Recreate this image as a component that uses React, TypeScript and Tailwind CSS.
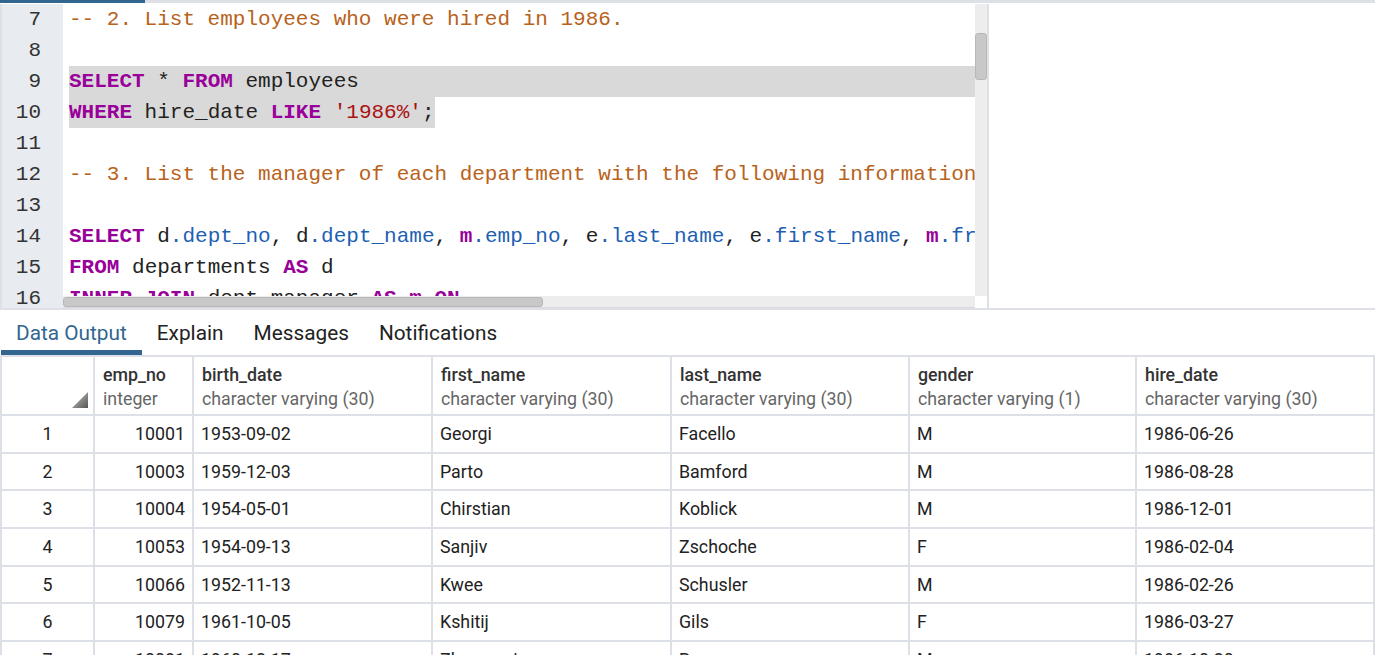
import React from 'react';

type Tok = [string, string?];

const KW = 'text-[#990099] font-bold';
const CM = 'text-[#b8621c]';
const ST = 'text-[#aa1111]';
const PR = 'text-[#1d5fb3]';

const lines: { n: number; toks: Tok[]; sel?: 'full' | 'text' }[] = [
  { n: 7, toks: [['-- 2. List employees who were hired in 1986.', CM]] },
  { n: 8, toks: [] },
  { n: 9, sel: 'full', toks: [['SELECT', KW], [' * '], ['FROM', KW], [' employees']] },
  { n: 10, sel: 'text', toks: [['WHERE', KW], [' hire_date '], ['LIKE', KW], [' '], ["'1986%'", ST], [';']] },
  { n: 11, toks: [] },
  { n: 12, toks: [['-- 3. List the manager of each department with the following information: department number, department name', CM]] },
  { n: 13, toks: [] },
  {
    n: 14,
    toks: [
      ['SELECT', KW], [' d'], ['.dept_no', PR], [', d'], ['.dept_name', PR], [', '], ['m', KW], ['.emp_no', PR],
      [', e'], ['.last_name', PR], [', e'], ['.first_name', PR], [', '], ['m', KW], ['.from_date', PR], [', '], ['m', KW], ['.to_date', PR],
    ],
  },
  { n: 15, toks: [['FROM', KW], [' departments '], ['AS', KW], [' d']] },
  { n: 16, toks: [['INNER JOIN', KW], [' dept_manager '], ['AS', KW], [' '], ['m', KW], [' '], ['ON', KW]] },
];

const cols = [
  { name: 'emp_no', type: 'integer' },
  { name: 'birth_date', type: 'character varying (30)' },
  { name: 'first_name', type: 'character varying (30)' },
  { name: 'last_name', type: 'character varying (30)' },
  { name: 'gender', type: 'character varying (1)' },
  { name: 'hire_date', type: 'character varying (30)' },
];

const rows = [
  ['10001', '1953-09-02', 'Georgi', 'Facello', 'M', '1986-06-26'],
  ['10003', '1959-12-03', 'Parto', 'Bamford', 'M', '1986-08-28'],
  ['10004', '1954-05-01', 'Chirstian', 'Koblick', 'M', '1986-12-01'],
  ['10053', '1954-09-13', 'Sanjiv', 'Zschoche', 'F', '1986-02-04'],
  ['10066', '1952-11-13', 'Kwee', 'Schusler', 'M', '1986-02-26'],
  ['10079', '1961-10-05', 'Kshitij', 'Gils', 'F', '1986-03-27'],
  ['10081', '1960-12-17', 'Zhongwei', 'Rosen', 'M', '1986-10-30'],
];

const tabs = ['Data Output', 'Explain', 'Messages', 'Notifications'];

const mono = "font-['Liberation_Mono','DejaVu_Sans_Mono',monospace]";

const App: React.FC = () => {
  return (
    <div className="w-[1375px] h-[667px] overflow-hidden bg-white font-['Roboto','Liberation_Sans',sans-serif]">
      {/* top strip */}
      <div className="flex h-[4px]">
        <div className="w-[145px] h-[3px] bg-[#326690]" />
        <div className="flex-1 h-[3px] bg-[#dde0e6]" />
      </div>

      {/* editor */}
      <div className="flex h-[304px]">
        <div className={`w-[63px] shrink-0 bg-[#e8ebf0] border-l-2 border-[#dde0e6] text-[#333] text-right pr-[22px] ${mono} text-[21px]`}>
          {lines.map((l) => (
            <div key={l.n} className="h-[31px] leading-[31px]">{l.n}</div>
          ))}
        </div>

        <div className={`relative w-[912px] shrink-0 overflow-hidden ${mono} text-[21px] text-[#222]`}>
          {lines.map((l) => (
            <div key={l.n} className="h-[31px] leading-[31px] flex whitespace-pre">
              <div className={`ml-[6px] ${l.sel === 'full' ? 'flex-1 bg-[#d9d9d9]' : ''} ${l.sel === 'text' ? 'bg-[#d9d9d9]' : ''}`}>
                {l.toks.map((t, i) => (
                  <span key={i} className={t[1] ?? ''}>{t[0]}</span>
                ))}
              </div>
            </div>
          ))}
          {/* horizontal scrollbar */}
          <div className="absolute left-0 bottom-0 w-full h-[12px] bg-[#ededed] border-b border-[#dadada]">
            <div className="w-[480px] h-[10px] mt-px bg-[#c8c8c8] border border-[#b8b8b8] rounded-[3px]" />
          </div>
        </div>

        {/* vertical scrollbar */}
        <div className="w-[12px] shrink-0 flex flex-col">
          <div className="h-[292px] bg-[#ededed] pt-[29px]">
            <div className="w-[12px] h-[47px] bg-[#c8c8c8] border border-[#b8b8b8] rounded-[3px]" />
          </div>
          <div className="flex-1 bg-white" />
        </div>
        <div className="w-[2px] shrink-0 bg-[#dde0e6]" />
        <div className="flex-1 bg-white" />
      </div>
      <div className="h-[2px] bg-[#dde0e6]" />

      {/* tabs */}
      <div className="flex h-[45px] pl-px">
        {tabs.map((t, i) => (
          <div
            key={t}
            className={`px-[15px] flex items-center text-[20.8px] border-b-[5px] pt-[7px] ${
              i === 0 ? 'text-[#326690] border-[#326690]' : 'text-[#222] border-transparent'
            }`}
          >
            {t}
          </div>
        ))}
      </div>

      {/* grid */}
      <div className="h-[300px] overflow-hidden">
        <div className="grid grid-cols-[91px_97px_237px_237px_236px_225px_236px] grid-rows-[57px] auto-rows-[35.67px] gap-[2px] p-[2px] pb-0 bg-[#dde0e6] text-[17.8px] text-[#222]">
          <div className="relative bg-white">
            <div className="absolute right-[5px] bottom-[6px] w-[16px] h-[16px] bg-gradient-to-br from-[#d0d0d0] to-[#555] [clip-path:polygon(100%_0,100%_100%,0_100%)]" />
          </div>
          {cols.map((c) => (
            <div key={c.name} className="bg-white pl-[8px] pt-[6px] leading-[24px] whitespace-nowrap overflow-hidden">
              <div className="font-medium text-[#333]">{c.name}</div>
              <div className="text-[#666]">{c.type}</div>
            </div>
          ))}
          {rows.map((r, ri) => (
            <React.Fragment key={ri}>
              <div className="bg-white flex items-center justify-center pt-px">{ri + 1}</div>
              {r.map((v, ci) => (
                <div
                  key={ci}
                  className={`bg-white flex items-center whitespace-nowrap pt-px ${ci === 0 ? 'justify-end pr-[7px]' : 'pl-[7px]'}`}
                >
                  {v}
                </div>
              ))}
            </React.Fragment>
          ))}
        </div>
      </div>
    </div>
  );
};

export default App;
